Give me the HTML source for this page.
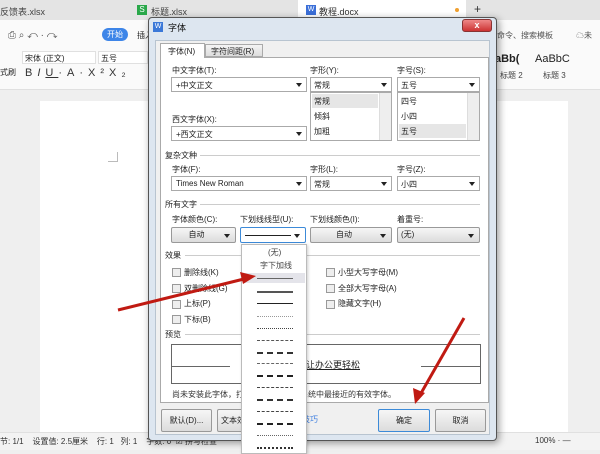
<!DOCTYPE html>
<html><head><meta charset="utf-8"><style>
*{margin:0;padding:0;box-sizing:border-box}
body{width:600px;height:450px;overflow:hidden;position:relative;background:#efefef;font-family:"Liberation Sans","Noto Sans CJK SC",sans-serif;font-size:8px;color:#222}
.a{position:absolute;white-space:nowrap}
.sel{position:absolute;height:15px;border:1px solid #aaa;background:#fff;padding:2px 4px;font-size:8px}
.sel::after{content:"";position:absolute;right:4px;top:5px;border:3px solid transparent;border-top:4px solid #222}
.btn{position:absolute;height:16px;border:1px solid #999;border-radius:2px;background:linear-gradient(#f6f6f6,#dcdcdc);text-align:center;font-size:8px;line-height:14px}
.btn.dd::after{content:"";position:absolute;right:5px;top:6px;border:3px solid transparent;border-top:4px solid #222}
.cb{position:absolute;width:9px;height:9px;border:1px solid #999;background:#eee}
.grp{position:absolute;height:1px;background:#ccc}
.list{position:absolute;border:1px solid #aaa;background:#fff}
.ln{position:absolute;left:15px;width:36px}
</style></head><body>
<!-- tab bar -->
<div class="a" style="left:0;top:0;width:600px;height:20px;background:#e4e4e4"></div>
<div class="a" style="left:0;top:5px;font-size:9px;color:#444">反馈表.xlsx</div>
<div class="a" style="left:137;top:0"></div>
<div class="a" style="left:137px;top:5px;width:10px;height:10px;background:#2aa84a;color:#fff;font-size:8px;text-align:center;line-height:10px">S</div>
<div class="a" style="left:151px;top:5px;font-size:9px;color:#444">标题.xlsx</div>
<div class="a" style="left:298px;top:0;width:168px;height:20px;background:#fff"></div>
<div class="a" style="left:306px;top:5px;width:10px;height:10px;background:#3b6fd8;color:#fff;font-size:7px;text-align:center;line-height:10px">W</div>
<div class="a" style="left:319px;top:5px;font-size:9px;color:#333">教程.docx</div>
<div class="a" style="left:455px;top:8px;width:4px;height:4px;border-radius:50%;background:#f0a030"></div>
<div class="a" style="left:474px;top:2px;font-size:12px;color:#333">+</div>
<!-- toolbar -->
<div class="a" style="left:0;top:20px;width:600px;height:70px;background:#fafafa;border-bottom:1px solid #e0e0e0"></div>
<div class="a" style="left:102px;top:28px;width:26px;height:13px;border-radius:7px;background:#3d85e8;color:#fff;font-size:8px;text-align:center;line-height:13px">开始</div>
<div class="a" style="left:137px;top:30px;font-size:8px">插入</div>
<div class="a" style="left:8px;top:30px;font-size:10px;color:#555">⎙ ⌕ ↶ · ↷</div>
<div class="a" style="left:22px;top:51px;width:74px;height:13px;border:1px solid #e0e0e0;background:#fff;padding:1px 2px;font-size:8px">宋体 (正文)</div>
<div class="a" style="left:98px;top:51px;width:50px;height:13px;border:1px solid #e0e0e0;background:#fff;padding:1px 2px;font-size:8px">五号</div>
<div class="a" style="left:25px;top:67px;font-size:11px;color:#333;letter-spacing:5px">B<i>I</i><u>U</u>·A·X²X₂</div>
<div class="a" style="left:0;top:67px;font-size:8px">式刷</div>
<div class="a" style="left:497px;top:30px;font-size:8px;color:#555">命令、搜索模板</div>
<div class="a" style="left:576px;top:30px;font-size:8px;color:#555">☁未</div>
<div class="a" style="left:495px;top:53px;font-size:11px;font-weight:bold">aBb(</div>
<div class="a" style="left:535px;top:53px;font-size:11px">AaBbC</div>
<div class="a" style="left:500px;top:70px;font-size:8px;color:#444">标题 2</div>
<div class="a" style="left:543px;top:70px;font-size:8px;color:#444">标题 3</div>
<!-- document -->
<div class="a" style="left:40px;top:101px;width:528px;height:332px;background:#fff"></div>
<div class="a" style="left:108px;top:152px;width:10px;height:10px;border-right:1px solid #bbb;border-bottom:1px solid #bbb"></div>
<!-- status bar -->
<div class="a" style="left:0;top:432px;width:600px;height:18px;background:#f3f3f3;border-top:1px solid #e0e0e0"></div>
<div class="a" style="left:0;top:436px;font-size:8px;color:#333">节: 1/1 &nbsp;&nbsp; 设置值: 2.5厘米 &nbsp;&nbsp; 行: 1 &nbsp; 列: 1 &nbsp;&nbsp; 字数: 0 &nbsp;☑ 拼写检查</div>
<div class="a" style="left:535px;top:436px;font-size:8px;color:#333">100% ·  —</div>
<!-- dialog -->
<div class="a" style="left:148px;top:17px;width:349px;height:424px;background:#dde6f0;border:1px solid #555;border-radius:4px;box-shadow:2px 2px 8px rgba(0,0,0,.4)"></div>
<div class="a" style="left:153px;top:22px;width:10px;height:10px;background:#3b78d8;color:#fff;font-size:7px;text-align:center;line-height:10px">W</div>
<div class="a" style="left:168px;top:21px;font-size:9px;color:#111">字体</div>
<div class="a" style="left:462px;top:19px;width:30px;height:13px;border-radius:3px;background:linear-gradient(#e88,#c33);border:1px solid #833;color:#fff;text-align:center;font-size:9px;line-height:11px;font-weight:bold">x</div>
<div class="a" style="left:155px;top:40px;width:335px;height:395px;background:#f0f0f0;border:1px solid #b8c4d0"></div>
<div class="a" style="left:160px;top:57px;width:329px;height:346px;background:#fff;border:1px solid #aaa"></div>
<div class="a" style="left:160px;top:43px;width:45px;height:15px;background:#fff;border:1px solid #aaa;border-bottom:none;font-size:8px;padding:2px 0 0 7px">字体(N)</div>
<div class="a" style="left:205px;top:44px;width:58px;height:13px;background:linear-gradient(#f4f4f4,#ddd);border:1px solid #aaa;font-size:8px;padding:1px 0 0 5px">字符间距(R)</div>

<div class="a" style="left:172px;top:65px">中文字体(T):</div>
<div class="sel" style="left:171px;top:77px;width:136px">+中文正文</div>
<div class="a" style="left:310px;top:65px">字形(Y):</div>
<div class="sel" style="left:310px;top:77px;width:82px;padding-left:3px">常规</div>
<div class="list" style="left:310px;top:92px;width:82px;height:49px"><div class="a" style="left:1px;top:1px;width:66px;height:14px;background:#e6e6e6"></div><div class="a" style="left:3px;top:3px">常规</div><div class="a" style="left:3px;top:18px">倾斜</div><div class="a" style="left:3px;top:33px">加粗</div><div class="a" style="right:0;top:0;width:12px;height:47px;background:#eee;border-left:1px solid #ddd"></div></div>
<div class="a" style="left:397px;top:65px">字号(S):</div>
<div class="sel" style="left:397px;top:77px;width:83px;padding-left:3px">五号</div>
<div class="list" style="left:397px;top:92px;width:83px;height:49px"><div class="a" style="left:1px;top:31px;width:67px;height:14px;background:#e6e6e6"></div><div class="a" style="left:3px;top:3px">四号</div><div class="a" style="left:3px;top:18px">小四</div><div class="a" style="left:3px;top:33px">五号</div><div class="a" style="right:0;top:0;width:12px;height:47px;background:#eee;border-left:1px solid #ddd"></div></div>
<div class="a" style="left:172px;top:114px">西文字体(X):</div>
<div class="sel" style="left:171px;top:126px;width:136px">+西文正文</div>

<div class="a" style="left:165px;top:150px">复杂文种</div><div class="grp" style="left:200px;top:155px;width:280px"></div>
<div class="a" style="left:172px;top:164px">字体(F):</div>
<div class="a" style="left:310px;top:164px">字形(L):</div>
<div class="a" style="left:397px;top:164px">字号(Z):</div>
<div class="sel" style="left:171px;top:176px;width:136px">Times New Roman</div>
<div class="sel" style="left:310px;top:176px;width:82px;padding-left:3px">常规</div>
<div class="sel" style="left:397px;top:176px;width:83px;padding-left:3px">小四</div>

<div class="a" style="left:165px;top:199px">所有文字</div><div class="grp" style="left:200px;top:204px;width:280px"></div>
<div class="a" style="left:172px;top:214px">字体颜色(C):</div>
<div class="a" style="left:240px;top:214px">下划线线型(U):</div>
<div class="a" style="left:310px;top:214px">下划线颜色(I):</div>
<div class="a" style="left:397px;top:214px">着重号:</div>
<div class="btn dd" style="left:171px;top:227px;width:65px;padding-right:14px">自动</div>
<div class="btn dd" style="left:240px;top:227px;width:66px;border:1px solid #3c8ad8;background:#fff"><div class="a" style="left:4px;top:7px;width:46px;height:1px;background:#222"></div></div>
<div class="btn dd" style="left:310px;top:227px;width:82px;padding-right:14px">自动</div>
<div class="btn dd" style="left:397px;top:227px;width:83px;text-align:left;padding-left:3px">(无)</div>

<div class="a" style="left:165px;top:250px">效果</div><div class="grp" style="left:185px;top:255px;width:295px"></div>
<div class="cb" style="left:172px;top:268px"></div><div class="a" style="left:184px;top:267px">删除线(K)</div>
<div class="cb" style="left:172px;top:284px"></div><div class="a" style="left:184px;top:283px">双删除线(G)</div>
<div class="cb" style="left:172px;top:300px"></div><div class="a" style="left:184px;top:298px">上标(P)</div>
<div class="cb" style="left:172px;top:315px"></div><div class="a" style="left:184px;top:314px">下标(B)</div>
<div class="cb" style="left:326px;top:268px"></div><div class="a" style="left:338px;top:267px">小型大写字母(M)</div>
<div class="cb" style="left:326px;top:284px"></div><div class="a" style="left:338px;top:283px">全部大写字母(A)</div>
<div class="cb" style="left:326px;top:300px"></div><div class="a" style="left:338px;top:298px">隐藏文字(H)</div>

<div class="a" style="left:165px;top:329px">预览</div><div class="grp" style="left:185px;top:334px;width:295px"></div>
<div class="a" style="left:171px;top:344px;width:310px;height:40px;border:1px solid #666"></div>
<div class="a" style="left:172px;top:366px;width:58px;height:1px;background:#666"></div>
<div class="a" style="left:421px;top:366px;width:59px;height:1px;background:#666"></div>
<div class="a" style="left:306px;top:358px;font-size:9px;text-decoration:underline">让办公更轻松</div>
<div class="a" style="left:172px;top:389px;color:#333">尚未安装此字体，打开文档时将使用系统中最接近的有效字体。</div>

<div class="btn" style="left:161px;top:409px;width:51px;height:23px;line-height:21px">默认(D)...</div>
<div class="btn" style="left:217px;top:409px;width:50px;height:23px;line-height:21px;text-align:left;padding-left:3px">文本效果</div>
<div class="a" style="left:302px;top:414px;color:#3b7de0">技巧</div>
<div class="btn" style="left:378px;top:409px;width:52px;height:23px;line-height:21px;border-color:#3c8ad8">确定</div>
<div class="btn" style="left:435px;top:409px;width:51px;height:23px;line-height:21px">取消</div>

<!-- dropdown list -->
<div class="a" style="left:241px;top:244px;width:66px;height:210px;background:#fff;border:1px solid #bbb;box-shadow:1px 1px 3px rgba(0,0,0,.2)">
<div class="a" style="left:26px;top:2px;color:#444">(无)</div>
<div class="a" style="left:18px;top:15px;color:#444">字下加线</div>
<div class="a" style="left:3px;top:28px;width:60px;height:10px;background:#e4e4ea"></div>
<div class="ln" style="top:33px;height:1px;background:#666"></div>
<div class="ln" style="top:46px;height:2px;background:#555"></div>
<div class="ln" style="top:58px;height:1px;background:#222"></div>
<div class="ln" style="top:71px;border-top:1px dotted #999"></div>
<div class="ln" style="top:83px;border-top:1px dotted #444"></div>
<div class="ln" style="top:95px;border-top:1px dashed #555"></div>
<div class="ln" style="top:107px;border-top:2px dashed #333"></div>
<div class="ln" style="top:118px;border-top:1px dashed #666"></div>
<div class="ln" style="top:130px;border-top:2px dashed #222"></div>
<div class="ln" style="top:142px;border-top:1px dashed #444"></div>
<div class="ln" style="top:154px;border-top:2px dashed #333"></div>
<div class="ln" style="top:166px;border-top:1px dashed #444"></div>
<div class="ln" style="top:178px;border-top:2px dashed #222"></div>
<div class="ln" style="top:190px;border-top:1px dotted #666"></div>
<div class="ln" style="top:202px;border-top:2px dotted #333"></div>
</div>

<!-- arrows -->
<svg class="a" style="left:0;top:0" width="600" height="450">
<line x1="118" y1="310" x2="248" y2="278" stroke="#c01a12" stroke-width="3"/>
<polygon points="256,276 240,272 243,284" fill="#c01a12"/>
<line x1="464" y1="318" x2="420" y2="395" stroke="#c01a12" stroke-width="3"/>
<polygon points="415,404 413,388 425,393" fill="#c01a12"/>
</svg>
</body></html>
